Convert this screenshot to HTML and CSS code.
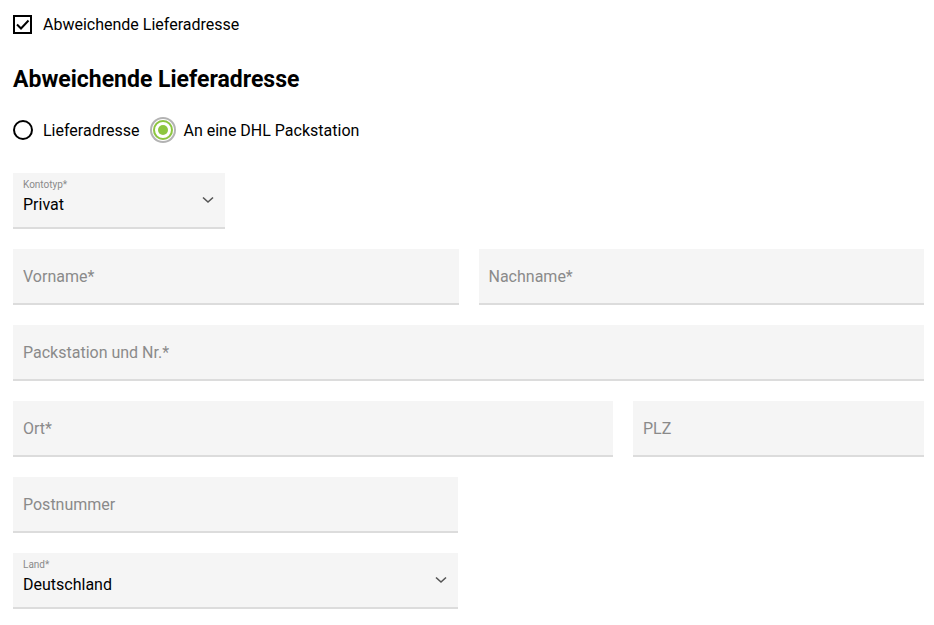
FILE: index.html
```html
<!DOCTYPE html>
<html lang="de">
<head>
    <meta charset="UTF-8">
    <meta name="viewport" content="width=device-width, initial-scale=1.0">
    <title>Abweichende Lieferadresse</title>
    <link rel="stylesheet" href="styles.css">
</head>
<body>
    <label class="check-row">
        <span class="checkbox">
            <svg width="15" height="15" viewBox="0 0 15 15"><path d="M2 7.5 L6 11.5 L13.5 3.5" fill="none" stroke="#000" stroke-width="2"/></svg>
        </span>
        <span>Abweichende Lieferadresse</span>
    </label>

    <h2 class="section-title">Abweichende Lieferadresse</h2>

    <div class="radio-group">
        <label class="radio-row">
            <span class="radio"></span>
            <span>Lieferadresse</span>
        </label>
        <label class="radio-row">
            <span class="radio radio-checked"><span class="radio-dot"></span></span>
            <span>An eine DHL Packstation</span>
        </label>
    </div>

    <div class="form">
        <!-- Kontotyp -->
        <div class="row">
            <div class="field select-field small">
                <span class="field-label">Kontotyp*</span>
                <span class="field-value">Privat</span>
                <svg class="chevron" width="12" height="8" viewBox="0 0 12 8"><path d="M1 1.5 L6 6 L11 1.5" fill="none" stroke="#555" stroke-width="1.6"/></svg>
            </div>
        </div>

        <div class="row">
            <input class="field" type="text" placeholder="Vorname*">
            <input class="field" type="text" placeholder="Nachname*">
        </div>

        <div class="row">
            <input class="field" type="text" placeholder="Packstation und Nr.*">
        </div>

        <div class="row row-ort">
            <input class="field" type="text" placeholder="Ort*">
            <input class="field" type="text" placeholder="PLZ">
        </div>

        <div class="row row-half">
            <input class="field" type="text" placeholder="Postnummer">
        </div>

        <div class="row row-half">
            <div class="field select-field">
                <span class="field-label">Land*</span>
                <span class="field-value">Deutschland</span>
                <svg class="chevron" width="12" height="8" viewBox="0 0 12 8"><path d="M1 1.5 L6 6 L11 1.5" fill="none" stroke="#555" stroke-width="1.6"/></svg>
            </div>
        </div>
    </div>
</body>
</html>
```

FILE: styles.css
```css
* {
    box-sizing: border-box;
    margin: 0;
    padding: 0;
}

body {
    background: #fff;
    color: #000;
    font-family: Roboto, 'Liberation Sans', Arial, sans-serif;
    font-size: 16px;
    padding: 15px 10px 0 13px;
}

.check-row {
    display: flex;
    align-items: center;
    gap: 11px;
    height: 19px;
}

.checkbox {
    width: 19px;
    height: 19px;
    border: 2px solid #000;
    display: flex;
    align-items: center;
    justify-content: center;
}

.section-title {
    font-size: 23px;
    font-weight: 700;
    line-height: 28px;
    margin-top: 32px;
}

.radio-group {
    display: flex;
    gap: 14px;
    margin-top: 26px;
}

.radio-row {
    display: flex;
    align-items: center;
    gap: 10px;
    height: 20px;
}

.radio {
    width: 20px;
    height: 20px;
    border: 2px solid #000;
    border-radius: 50%;
    display: flex;
    align-items: center;
    justify-content: center;
}

.radio-checked {
    border-color: #8dc63f;
    box-shadow: 0 0 0 1px #fff, 0 0 0 3px #b3b3b3;
}

.radio-dot {
    width: 10px;
    height: 10px;
    border-radius: 50%;
    background: #8dc63f;
}

.form {
    margin-top: 33px;
    display: flex;
    flex-direction: column;
    gap: 20px;
}

.row {
    display: flex;
    gap: 20px;
}

.field {
    flex: 1;
    height: 56px;
    background: #f5f5f5;
    border: none;
    border-bottom: 2px solid #dcdcdc;
    padding: 0 10px;
    font-family: inherit;
    font-size: 16px;
    color: #000;
    outline: none;
    min-width: 0;
}

.field::placeholder {
    color: #8a8a8a;
}

.row-ort .field:first-child {
    flex: 0 0 600px;
}

.row-half .field {
    flex: 0 0 445px;
}

.select-field {
    position: relative;
    display: flex;
    flex-direction: column;
    padding-top: 6px;
}

.select-field.small {
    flex: 0 0 212px;
}

.field-label {
    font-size: 10px;
    line-height: 12px;
    color: #8a8a8a;
}

.field-value {
    font-size: 16px;
    line-height: 20px;
    margin-top: 4px;
}

.chevron {
    position: absolute;
    right: 11px;
    top: 23px;
}
```
